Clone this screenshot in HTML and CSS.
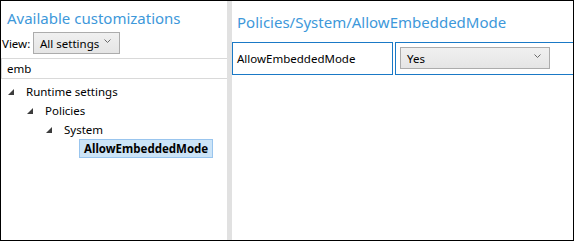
FILE: index.html
```html
<!doctype html>
<html lang="en">
<head>
	<meta charset="UTF-8">
	<title>Customizations</title>
	<link rel="stylesheet" href="styles.css">
</head>
<body>
	<div class="window">
		<div class="left">
			<div class="heading">Available customizations</div>
			<div class="view">
				<span class="view-label">View:</span>
				<div class="combo combo-view">
					<span>All settings</span>
					<svg class="chev" width="7" height="4" viewBox="0 0 7 4"><polyline points="0.5,0.5 3.5,3.5 6.5,0.5" fill="none" stroke="#6a6a6a" stroke-width="1"/></svg>
				</div>
			</div>
			<div class="search">emb</div>
			<ul class="tree">
				<li class="lvl0"><span class="arrow"><svg width="6" height="6" viewBox="0 0 6 6"><polygon points="6,0 6,6 0,6" fill="#3c3c3c"/></svg></span>Runtime settings</li>
				<li class="lvl1"><span class="arrow"><svg width="6" height="6" viewBox="0 0 6 6"><polygon points="6,0 6,6 0,6" fill="#3c3c3c"/></svg></span>Policies</li>
				<li class="lvl2"><span class="arrow"><svg width="6" height="6" viewBox="0 0 6 6"><polygon points="6,0 6,6 0,6" fill="#3c3c3c"/></svg></span>System</li>
				<li class="lvl3"><span class="selected">AllowEmbeddedMode</span></li>
			</ul>
		</div>
		<div class="splitter"></div>
		<div class="right">
			<div class="heading path">Policies/System/AllowEmbeddedMode</div>
			<div class="setting">
				<div class="cell name">AllowEmbeddedMode</div>
				<div class="cell value">
					<div class="combo combo-value">
						<span>Yes</span>
						<svg class="chev" width="7" height="4" viewBox="0 0 7 4"><polyline points="0.5,0.5 3.5,3.5 6.5,0.5" fill="none" stroke="#6a6a6a" stroke-width="1"/></svg>
					</div>
				</div>
			</div>
		</div>
	</div>
</body>
</html>
```

FILE: styles.css
```css
*{
  margin: 0;
  padding: 0;
  box-sizing: border-box;
}
body{
  font-family: "Noto Sans", "Open Sans", sans-serif;
  font-size: 11.5px;
  color: #000;
  background: #fff;
}
div.window{
  width: 574px;
  height: 241px;
  border: 1px solid #000;
  display: flex;
  overflow: hidden;
}
/*------------------------------left pane------------------------------*/
div.left{
  width: 226px;
  flex: none;
}
div.heading{
  color: #3d98da;
  font-size: 15px;
  line-height: 22px;
  padding: 6px 0 0 6px;
  height: 31px;
  white-space: nowrap;
}
div.view{
  display: flex;
  align-items: center;
  height: 22px;
}
span.view-label{
  padding-left: 1px;
  width: 32px;
}
div.combo{
  display: flex;
  align-items: center;
  justify-content: space-between;
  border: 1px solid #acacac;
  background: linear-gradient(#f0f0f0, #e5e5e5);
  height: 22px;
  padding: 0 8px 0 6px;
}
div.combo-view{
  width: 87px;
}
svg.chev{
  margin-top: -4px;
}
div.search{
  margin-top: 4px;
  height: 21px;
  line-height: 19px;
  border: 1px solid #d9d9d9;
  border-right-color: #e6e6e6;
  padding-left: 5px;
  width: 227px;
}
/*------------------------------tree------------------------------*/
ul.tree{
  list-style: none;
  padding-top: 3px;
}
ul.tree li{
  display: flex;
  align-items: center;
  height: 19px;
  white-space: nowrap;
}
span.arrow{
  display: inline-flex;
  width: 25px;
  padding-left: 7px;
}
li.lvl0{ padding-left: 0; }
li.lvl1{ padding-left: 19px; }
li.lvl2{ padding-left: 38px; }
li.lvl3{ padding-left: 78px; }
span.selected{
  font-weight: bold;
  background: #cce4f7;
  border: 1px solid #99c5ee;
  padding: 0 4px;
  line-height: 17px;
}
/*------------------------------splitter------------------------------*/
div.splitter{
  width: 5px;
  flex: none;
  background: #e1e1e1;
}
/*------------------------------right pane------------------------------*/
div.right{
  flex: 1;
  min-width: 0;
}
div.path{
  padding: 10px 0 0 5px;
  height: 41px;
  line-height: 22px;
}
div.setting{
  display: flex;
  gap: 2px;
  height: 33px;
}
div.cell{
  border: 1px solid #1a79c6;
  height: 33px;
}
div.name{
  width: 161px;
  padding-left: 4px;
  line-height: 31px;
}
div.value{
  flex: 1;
  padding: 4px 0 0 4px;
  margin-right: -2px;
}
div.combo-value{
  width: 150px;
  height: 22px;
}
```
